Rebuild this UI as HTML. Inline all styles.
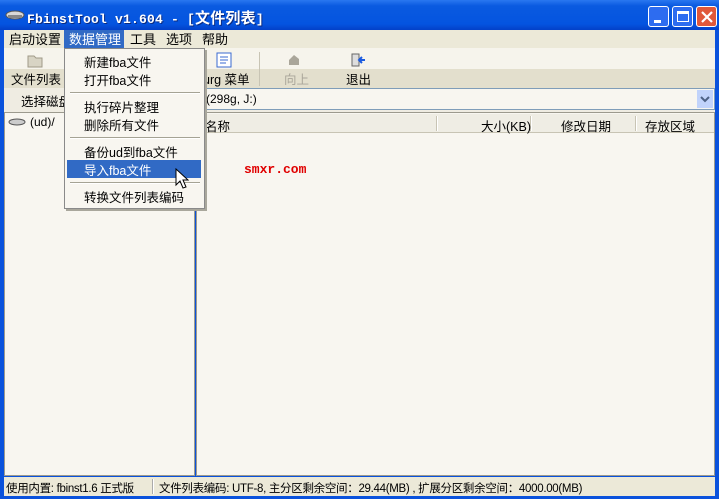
<!DOCTYPE html>
<html><head><meta charset="utf-8"><style>
*{margin:0;padding:0;box-sizing:border-box}
body{width:719px;height:499px;overflow:hidden;background:#0a52dc;font-family:"Liberation Sans","Noto Sans CJK SC","WenQuanYi Zen Hei",sans-serif;font-size:12px;color:#000;position:relative}
.a{position:absolute}
.title{left:0;top:0;width:719px;height:30px;background:linear-gradient(#2a78f0,#0a5ae0 20%,#0454e0 80%,#0340c8);}
.tt{left:27px;top:7px;color:#fff;font-family:"Liberation Mono","Noto Sans CJK SC",monospace;font-weight:bold;font-size:13px;letter-spacing:0.2px;text-shadow:1px 1px #0a2a80}
.tt span{font-size:15px}
.btn{top:6px;width:21px;height:21px;border:1px solid #fff;border-radius:3px;background:#2d6cf0}
.menu{left:4px;top:30px;width:711px;height:18px;background:#ece9d8}
.mi{top:31px;font-size:13px;height:17px;line-height:17px}
.tb1{left:4px;top:48px;width:711px;height:21px;background:#f6f4ec}
.tb2{left:4px;top:69px;width:711px;height:19px;background:#e3dfcd}
.row{left:4px;top:88px;width:711px;height:24px;background:#efece2}
.panel{background:#f8f6f0}
.dd{left:64px;top:48px;width:141px;height:161px;background:#f8f6f0;border:1px solid #8a8a8a;box-shadow:2px 2px 0 #a9a79c}
.it{left:19px;font-size:12.5px}
.sep{left:5px;width:130px;height:2px;border-top:1px solid #a5a394;border-bottom:1px solid #fff}
</style></head><body>
<div class="a title"></div>
<svg class="a" style="left:5px;top:9px" width="20" height="12"><ellipse cx="10" cy="6" rx="9" ry="4" fill="#d8d8d8" stroke="#555"/><rect x="3" y="6" width="14" height="3" fill="#888"/></svg>
<div class="a tt">FbinstTool v1.604 - [<span>文件列表</span>]</div>
<div class="a btn" style="left:648px"><div class="a" style="left:5px;top:13px;width:7px;height:3px;background:#fff"></div></div>
<div class="a btn" style="left:672px"><div class="a" style="left:4px;top:4px;width:12px;height:11px;border:1px solid #fff;border-top:3px solid #fff"></div></div>
<div class="a btn" style="left:696px;background:#e0583a"><svg class="a" style="left:3px;top:3px" width="14" height="14"><path d="M2 2L12 12M12 2L2 12" stroke="#fff" stroke-width="2.2"/></svg></div>
<div class="a menu"></div>
<div class="a mi" style="left:9px">启动设置</div>
<div class="a" style="left:64px;top:30px;width:60px;height:18px;background:#316ac5"></div>
<div class="a mi" style="left:69px;color:#fff">数据管理</div>
<div class="a mi" style="left:130px">工具</div>
<div class="a mi" style="left:166px">选项</div>
<div class="a mi" style="left:202px">帮助</div>
<div class="a tb1"></div><div class="a tb2"></div>
<svg class="a" style="left:26px;top:52px" width="18" height="16"><path d="M2 4h6l2 2h6v9H2z" fill="#d8d4c4" stroke="#a09a88"/></svg>
<div class="a" style="left:11px;top:69px;font-size:12.5px">文件列表</div>
<svg class="a" style="left:216px;top:52px" width="16" height="16"><rect x="1" y="1" width="14" height="14" fill="#fff" stroke="#3a6ad0"/><path d="M4 5h8M4 8h8M4 11h6" stroke="#3a6ad0"/></svg>
<div class="a" style="left:203px;top:69px;font-size:12.5px">urg 菜单</div>
<div class="a" style="left:259px;top:52px;width:1px;height:34px;background:#c8c4b4"></div>
<svg class="a" style="left:287px;top:53px" width="14" height="14"><path d="M2 7l5-5 5 4v6H2z" fill="#aaa69a"/></svg>
<div class="a" style="left:284px;top:69px;font-size:12.5px;color:#aaa69a">向上</div>
<svg class="a" style="left:350px;top:52px" width="16" height="16"><rect x="2" y="2" width="7" height="12" fill="#ddd" stroke="#666"/><path d="M15 8H10M12 5l-3 3 3 3" stroke="#1a5ae0" stroke-width="2" fill="none"/></svg>
<div class="a" style="left:346px;top:69px;font-size:12.5px">退出</div>
<div class="a row"></div>
<div class="a" style="left:21px;top:91px;font-size:12.5px">选择磁盘</div>
<div class="a" style="left:202px;top:88px;width:513px;height:22px;background:#f8f6f0;border:1px solid #7f9db9"></div>
<div class="a" style="left:206px;top:92px;font-size:12px">(298g, J:)</div>
<div class="a" style="left:697px;top:90px;width:16px;height:18px;background:#c1d3fb"><svg width="16" height="18"><path d="M4 7l4 4 4-4" stroke="#4d6185" stroke-width="2" fill="none"/></svg></div>
<div class="a panel" style="left:4px;top:112px;width:191px;height:364px;border:1px solid #9c9a8e"></div>
<div class="a panel" style="left:196px;top:112px;width:519px;height:364px;border:1px solid #9c9a8e"></div>
<svg class="a" style="left:8px;top:117px" width="18" height="10"><ellipse cx="9" cy="5" rx="8" ry="3" fill="#ccc" stroke="#555"/></svg>
<div class="a" style="left:30px;top:115px">(ud)/</div>
<div class="a" style="left:197px;top:114px;width:517px;height:19px;background:#efede4;border-bottom:1px solid #c8c4b4"></div>
<div class="a" style="left:205px;top:116px;font-size:12.5px">名称</div>
<div class="a" style="left:436px;top:116px;width:2px;height:15px;border-left:1px solid #c8c4b4;border-right:1px solid #fff"></div>
<div class="a" style="left:530px;top:116px;width:2px;height:15px;border-left:1px solid #c8c4b4;border-right:1px solid #fff"></div>
<div class="a" style="left:635px;top:116px;width:2px;height:15px;border-left:1px solid #c8c4b4;border-right:1px solid #fff"></div>
<div class="a" style="left:481px;top:116px;font-size:12.5px">大小(KB)</div>
<div class="a" style="left:561px;top:116px;font-size:12.5px">修改日期</div>
<div class="a" style="left:645px;top:116px;font-size:12.5px">存放区域</div>
<div class="a" style="left:244px;top:162px;color:#e00000;font-family:'Liberation Mono',monospace;font-weight:bold;font-size:13px">smxr.com</div>
<div class="a" style="left:4px;top:477px;width:711px;height:19px;background:#ece9d8"></div>
<div class="a" style="left:6px;top:480px;font-size:11.5px;letter-spacing:-0.3px">使用内置: fbinst1.6 正式版</div>
<div class="a" style="left:152px;top:479px;width:2px;height:15px;border-left:1px solid #aaa;border-right:1px solid #fff"></div>
<div class="a" style="left:159px;top:480px;font-size:11.5px;letter-spacing:-0.3px">文件列表编码: UTF-8, 主分区剩余空间：29.44(MB) , 扩展分区剩余空间：4000.00(MB)</div>
<div class="a dd">
<div class="a it" style="top:3px">新建fba文件</div>
<div class="a it" style="top:21px">打开fba文件</div>
<div class="a sep" style="top:43px"></div>
<div class="a it" style="top:48px">执行碎片整理</div>
<div class="a it" style="top:66px">删除所有文件</div>
<div class="a sep" style="top:88px"></div>
<div class="a it" style="top:93px">备份ud到fba文件</div>
<div class="a" style="left:2px;top:111px;width:134px;height:18px;background:#316ac5"></div>
<div class="a it" style="top:111px;color:#fff">导入fba文件</div>
<div class="a sep" style="top:133px"></div>
<div class="a it" style="top:138px">转换文件列表编码</div>
</div>
<svg class="a" style="left:175px;top:168px" width="14" height="22"><path d="M1 1v16l4-4 3 7 3-1-3-7h5z" fill="#fff" stroke="#000"/></svg>
</body></html>
